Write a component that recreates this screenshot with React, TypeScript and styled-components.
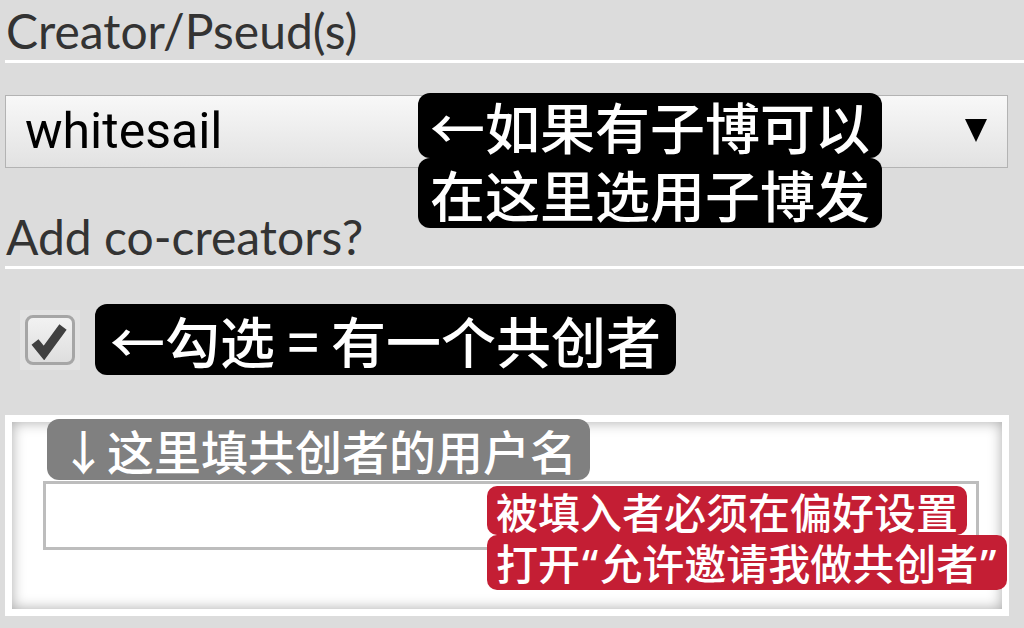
import React from "react";
import styled, { createGlobalStyle } from "styled-components";

const Global = createGlobalStyle`
  html, body { margin: 0; padding: 0; background: #dcdcdc; }
  body { font-family: Roboto, "Noto Sans", "Noto Sans CJK SC", sans-serif; }
  #root { width: 1024px; height: 628px; overflow: hidden; }
`;

const Page = styled.div`
  position: relative;
  width: 1024px;
  height: 628px;
  padding-left: 5px;
  box-sizing: border-box;
  display: flex;
  flex-direction: column;
`;

const FieldLabel = styled.div<{ $top: number }>`
  margin-top: ${(p) => p.$top}px;
  font-family: Lato, Roboto, sans-serif;
  font-size: 48px;
  line-height: 56px;
  color: #333333;
  padding-left: 1px;
  padding-bottom: 1px;
  border-bottom: 3px solid #ffffff;
`;

const Select = styled.div`
  margin-top: 32px;
  margin-right: 16px;
  height: 73px;
  box-sizing: border-box;
  border: 1px solid #b3b3b3;
  background: linear-gradient(#f8f8f8, #e2e2e2);
  display: flex;
  align-items: center;
  justify-content: space-between;
  padding: 0 20px 2px 19px;
  font-size: 50px;
  color: #000;
`;

const Caret = styled.span`
  width: 0;
  height: 0;
  border-left: 11px solid transparent;
  border-right: 11px solid transparent;
  border-top: 23px solid #000;
`;

const CheckRow = styled.div`
  margin-top: 35px;
  display: flex;
  align-items: center;
  gap: 15px;
  padding-left: 15px;
`;

const CheckFrame = styled.div`
  width: 60px;
  height: 60px;
  background: #e2e2e2;
  display: flex;
  align-items: center;
  justify-content: center;
`;

const CheckBox = styled.div`
  width: 50px;
  height: 50px;
  box-sizing: border-box;
  border: 3px solid #a6a6a6;
  border-radius: 8px;
  background: linear-gradient(#f2f2f2, #dedede);
  display: flex;
  align-items: center;
  justify-content: center;
`;

const Note = styled.div<{ $bg: string; $size: number; $lh: number; $pad: number; $r: number }>`
  background: ${(p) => p.$bg};
  color: #ffffff;
  font-family: "Noto Sans CJK SC", "Noto Sans", sans-serif;
  font-weight: 500;
  font-size: ${(p) => p.$size}px;
  line-height: ${(p) => p.$lh}px;
  padding: 0 ${(p) => p.$pad}px;
  border-radius: ${(p) => p.$r}px;
  white-space: nowrap;
  width: fit-content;
`;

const Quote = styled.span`
  font-family: "Noto Sans", sans-serif;
  font-weight: 500;
  padding: 0 2px;
`;

const NoteStack = styled.div<{ $left: number; $top: number }>`
  position: absolute;
  left: ${(p) => p.$left}px;
  top: ${(p) => p.$top}px;
  display: flex;
  flex-direction: column;
  align-items: flex-start;
`;

const Fieldset = styled.div`
  margin-top: 40px;
  margin-right: 15px;
  height: 201px;
  box-sizing: border-box;
  border: 7px solid #ffffff;
  background: #ffffff;
  box-shadow: inset 0 0 14px rgba(0, 0, 0, 0.34);
  padding: 59px 23px 0 31px;
`;

const TextInput = styled.div`
  height: 69px;
  box-sizing: border-box;
  border: 3px solid #bdbdbd;
  background: #ffffff;
`;

export default function App() {
  return (
    <>
      <Global />
      <Page>
        <FieldLabel $top={3}>Creator/Pseud(s)</FieldLabel>
        <Select>
          <span>whitesail</span>
          <Caret />
        </Select>
        <FieldLabel $top={41}>Add co-creators?</FieldLabel>
        <CheckRow>
          <CheckFrame>
            <CheckBox>
              <svg width="40" height="40" viewBox="0 0 40 40">
                <polyline
                  points="5,22 14,33 33,7"
                  fill="none"
                  stroke="#404040"
                  strokeWidth="9"
                  strokeLinejoin="miter"
                />
              </svg>
            </CheckBox>
          </CheckFrame>
          <Note $bg="#000" $size={55} $lh={71} $pad={15} $r={12}>
            ←勾选 = 有一个共创者
          </Note>
        </CheckRow>
        <Fieldset>
          <TextInput />
        </Fieldset>

        <NoteStack $left={418} $top={93}>
          <Note $bg="#000" $size={55} $lh={65} $pad={12} $r={12}>←如果有子博可以</Note>
          <Note $bg="#000" $size={55} $lh={70} $pad={12} $r={12}>在这里选用子博发</Note>
        </NoteStack>

        <NoteStack $left={47} $top={419}>
          <Note $bg="#808080" $size={47} $lh={61} $pad={13} $r={12}>↓这里填共创者的用户名</Note>
        </NoteStack>

        <NoteStack $left={487} $top={486}>
          <Note $bg="#c41e34" $size={42} $lh={49} $pad={9} $r={10}>被填入者必须在偏好设置</Note>
          <Note $bg="#c41e34" $size={42} $lh={53} $pad={9} $r={10}>
            打开<Quote>“</Quote>允许邀请我做共创者<Quote>”</Quote>
          </Note>
        </NoteStack>
      </Page>
    </>
  );
}
